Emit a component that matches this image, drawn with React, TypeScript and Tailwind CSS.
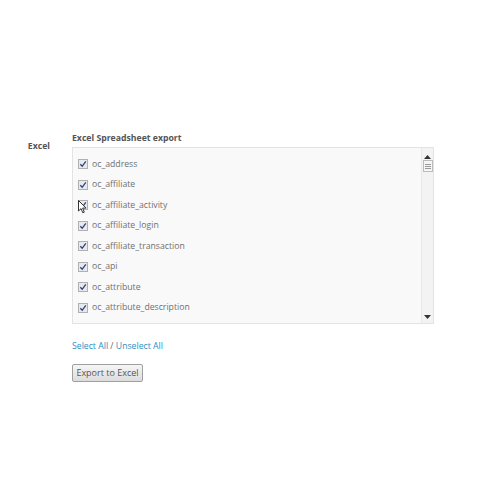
import React from 'react';

const tables = [
  'oc_address',
  'oc_affiliate',
  'oc_affiliate_activity',
  'oc_affiliate_login',
  'oc_affiliate_transaction',
  'oc_api',
  'oc_attribute',
  'oc_attribute_description',
  'oc_attribute_group',
];

const Check: React.FC = () => (
  <span className="w-[10px] h-[10px] border border-[#b0b0b0] bg-[#e6e9ef] flex items-center justify-center shrink-0">
    <svg width="8" height="8" viewBox="0 0 8 8">
      <path d="M1.3 4.3 L3.2 6.3 L6.8 1.4" fill="none" stroke="#34446e" strokeWidth="1.3" />
    </svg>
  </span>
);

const App: React.FC = () => {
  return (
    <div className="w-[500px] h-[500px] bg-white font-['Open_Sans',sans-serif] text-[8.7px] text-[#707070] relative">
      <div className="flex pt-[132px]">
        <div className="w-[72px] pr-[22px] text-right font-bold text-[#555] pt-[8px]">Excel</div>
        <div className="flex flex-col">
          <div className="font-bold text-[#555] h-[15px] leading-[12px]">Excel Spreadsheet export</div>
          <div className="w-[362px] h-[177px] border border-[#e3e3e3] bg-[#f9f9f9] flex">
            <div className="flex-1 overflow-hidden pt-[6px] pl-[5px]">
              {tables.map((t) => (
                <div key={t} className="h-[20.5px] flex items-center gap-[4px]">
                  <Check />
                  <span>{t}</span>
                </div>
              ))}
            </div>
            <div className="w-[12px] border-l border-[#e8e8e8] bg-[#f3f3f3] flex flex-col items-center pt-[7px] pb-[4px]">
              <svg width="7" height="4" viewBox="0 0 7 4"><path d="M0 4 L3.5 0 L7 4 Z" fill="#333" /></svg>
              <div className="w-[10px] h-[12px] mt-[1px] border border-[#bbb] bg-[#f5f5f5] flex flex-col items-center justify-center gap-[1px]">
                <span className="w-[6px] h-px bg-[#999]" />
                <span className="w-[6px] h-px bg-[#999]" />
                <span className="w-[6px] h-px bg-[#999]" />
              </div>
              <div className="flex-1" />
              <svg width="7" height="4" viewBox="0 0 7 4"><path d="M0 0 L7 0 L3.5 4 Z" fill="#333" /></svg>
            </div>
          </div>
          <div className="mt-[16px] text-[#2a8fc4] leading-[12px]">
            <span>Select All</span>
            <span className="text-[#666]"> / </span>
            <span>Unselect All</span>
          </div>
          <div className="mt-[12px]">
            <button className="w-[71px] h-[18px] border border-[#a0a0a0] rounded-[2px] bg-gradient-to-b from-[#f6f6f6] to-[#dcdcdc] text-[#555] text-[9px] leading-[16px]">
              Export to Excel
            </button>
          </div>
        </div>
      </div>
      <svg className="absolute left-[78px] top-[200px]" width="9" height="14" viewBox="0 0 9 14">
        <path d="M0.5 0.5 L0.5 11 L3 8.6 L4.8 12.8 L6.3 12.1 L4.6 8.1 L8 8.1 Z" fill="#fff" stroke="#333" strokeWidth="1" />
      </svg>
    </div>
  );
};

export default App;
